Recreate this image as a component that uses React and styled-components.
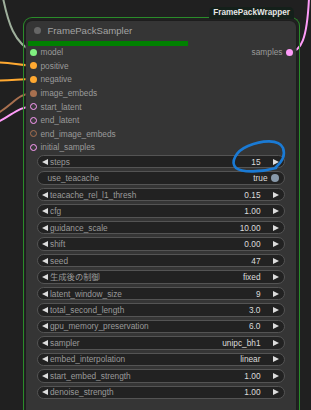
import React from "react";
import styled, { createGlobalStyle } from "styled-components";

const GlobalStyle = createGlobalStyle`
  html, body {
    margin: 0;
    padding: 0;
    background: #202020;
  }
`;

const Canvas = styled.div`
  position: relative;
  width: 311px;
  height: 410px;
  overflow: hidden;
  box-sizing: border-box;
  padding: 16.5px 0 0 23px;
  background: #202020;
  font-family: "Liberation Sans", Arial, "Noto Sans CJK JP", sans-serif;
`;

const Overlay = styled.svg`
  position: absolute;
  left: 0;
  top: 0;
  pointer-events: none;
  z-index: ${(p) => p.$z};
`;

const Group = styled.div`
  position: relative;
  z-index: 1;
  box-sizing: border-box;
  width: 277px;
  height: 420px;
  border: 1.5px solid #2a8c2a;
  border-bottom: none;
  border-radius: 9px 9px 0 0;
  padding: 3px 2.5px 0 1.5px;
`;

const GroupLabel = styled.div`
  position: absolute;
  top: -11px;
  right: 5px;
  height: 12px;
  padding: 0 4px;
  border-radius: 5px 5px 0 0;
  background: #14201a;
  color: #e6e6e6;
  font-size: 8.2px;
  font-weight: bold;
  line-height: 12px;
`;

const Node = styled.div`
  width: 270px;
  height: 400px;
  background: #353535;
  border-radius: 6px;
  box-shadow: 0 0 0 0.5px #1a1a1a;
`;

const Header = styled.div`
  display: flex;
  align-items: center;
  gap: 7px;
  height: 20px;
  padding-left: 8px;
  color: #a3a3a3;
  font-size: 9.6px;
`;

const HeaderDot = styled.span`
  width: 7px;
  height: 7px;
  border-radius: 50%;
  background: #666;
`;

const Progress = styled.div`
  margin-left: 2px;
  width: 160px;
  height: 5px;
  background: #008000;
`;

const Slots = styled.div`
  display: flex;
  justify-content: space-between;
`;

const Column = styled.div`
  display: flex;
  flex-direction: column;
`;

const SlotRow = styled.div`
  display: flex;
  align-items: center;
  gap: 3.5px;
  height: 13.6px;
  padding: ${(p) => (p.$out ? "0 2.5px 0 0" : "0 0 0 4.5px")};
  color: #9a9a9a;
  font-size: 8.3px;
`;

const Dot = styled.span`
  box-sizing: border-box;
  width: 7px;
  height: 7px;
  border-radius: 50%;
  background: ${(p) => (p.$ring ? "#3a3a3a" : p.$color)};
  border: ${(p) => (p.$ring ? `1.8px solid ${p.$color}` : "none")};
`;

const Widgets = styled.div`
  display: flex;
  flex-direction: column;
  gap: 2.9px;
  margin: 0.6px 0 0 11px;
  width: 248px;
`;

const Widget = styled.div`
  box-sizing: border-box;
  display: flex;
  align-items: center;
  height: 13.6px;
  padding: ${(p) => (p.$toggle ? "0 5px 0 10px" : "0 4.5px 0 4px")};
  border: 1px solid #545454;
  border-radius: 7px;
  background: #222;
  font-size: 8.3px;
  line-height: 10px;
`;

const ArrowLeft = styled.span`
  width: 0;
  height: 0;
  border-top: 3.6px solid transparent;
  border-bottom: 3.6px solid transparent;
  border-right: 6.5px solid #ddd;
  margin-right: 2.5px;
`;

const ArrowRight = styled.span`
  width: 0;
  height: 0;
  border-top: 3.6px solid transparent;
  border-bottom: 3.6px solid transparent;
  border-left: 6.5px solid #ddd;
  margin-left: 12.5px;
`;

const Label = styled.span`
  flex: 1;
  color: #9a9a9a;
  white-space: nowrap;
`;

const Value = styled.span`
  color: #dcdcdc;
  white-space: nowrap;
`;

const Knob = styled.span`
  width: 8px;
  height: 8px;
  margin-left: 3px;
  border-radius: 50%;
  background: #8899aa;
`;

const inputs = [
  { name: "model", color: "#80f080" },
  { name: "positive", color: "#ffa931" },
  { name: "negative", color: "#ffa931" },
  { name: "image_embeds", color: "#a8704f" },
  { name: "start_latent", color: "#ff9cf9", ring: true },
  { name: "end_latent", color: "#ff9cf9", ring: true },
  { name: "end_image_embeds", color: "#a8704f", ring: true },
  { name: "initial_samples", color: "#ff9cf9", ring: true },
];

const widgets = [
  ["steps", "15"],
  ["use_teacache", "true", true],
  ["teacache_rel_l1_thresh", "0.15"],
  ["cfg", "1.00"],
  ["guidance_scale", "10.00"],
  ["shift", "0.00"],
  ["seed", "47"],
  ["生成後の制御", "fixed"],
  ["latent_window_size", "9"],
  ["total_second_length", "3.0"],
  ["gpu_memory_preservation", "6.0"],
  ["sampler", "unipc_bh1"],
  ["embed_interpolation", "linear"],
  ["start_embed_strength", "1.00"],
  ["denoise_strength", "1.00"],
];

export default function App() {
  return (
    <>
      <GlobalStyle />
      <Canvas>
        <Overlay $z={0} width="311" height="410" viewBox="0 0 311 410">
          <g fill="none" strokeWidth="2" strokeLinecap="round">
            <path d="M3 -2 C8 22, 14 44, 34 52" stroke="#9fb09c" />
            <path d="M-2 62.5 C14 62.5, 18 65.5, 34 65.5" stroke="#ffa931" />
            <path d="M-2 80.5 C14 80.5, 18 79, 34 79" stroke="#ffa931" />
            <path d="M-2 113 C14 104, 18 93, 34 93" stroke="#a8704f" />
            <path d="M-2 122 C14 114, 18 106.5, 34 106.5" stroke="#ff9cf9" />
            <path d="M290 52 C301 51, 307 40, 309 -2" stroke="#ff9cf9" />
          </g>
        </Overlay>
        <Group>
          <GroupLabel>FramePackWrapper</GroupLabel>
          <Node>
            <Header>
              <HeaderDot />
              FramePackSampler
            </Header>
            <Progress />
            <Slots>
              <Column>
                {inputs.map((s) => (
                  <SlotRow key={s.name}>
                    <Dot $color={s.color} $ring={s.ring} />
                    {s.name}
                  </SlotRow>
                ))}
              </Column>
              <Column>
                <SlotRow $out>
                  samples
                  <Dot $color="#ff9cf9" />
                </SlotRow>
              </Column>
            </Slots>
            <Widgets>
              {widgets.map(([label, value, toggle]) =>
                toggle ? (
                  <Widget key={label} $toggle>
                    <Label>{label}</Label>
                    <Value>{value}</Value>
                    <Knob />
                  </Widget>
                ) : (
                  <Widget key={label}>
                    <ArrowLeft />
                    <Label>{label}</Label>
                    <Value>{value}</Value>
                    <ArrowRight />
                  </Widget>
                )
              )}
            </Widgets>
          </Node>
        </Group>
        <Overlay $z={5} width="311" height="410" viewBox="0 0 311 410">
          <path
            d="M276 168 C262 172, 242 173, 236 168 C230 162, 236 151, 248 146 C262 140, 279 139, 283 148 C286 156, 281 163, 275 168"
            fill="none"
            stroke="#1a7ad4"
            strokeWidth="2.6"
            strokeLinecap="round"
          />
        </Overlay>
      </Canvas>
    </>
  );
}
